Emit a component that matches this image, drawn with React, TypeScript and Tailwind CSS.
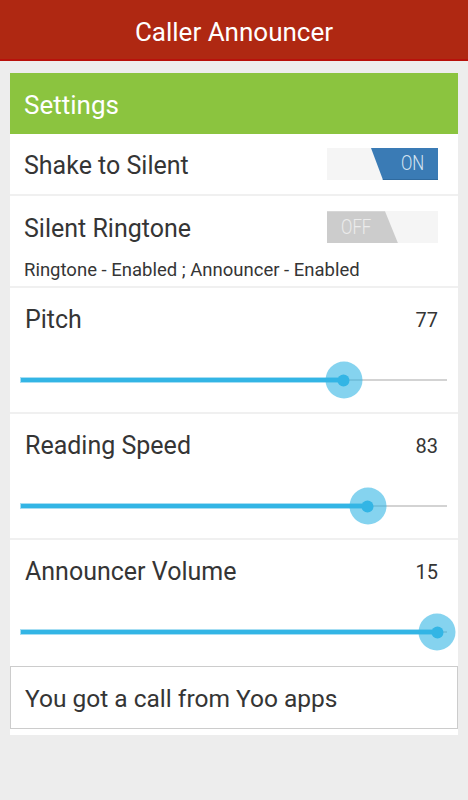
import React from "react";

const font = { fontFamily: "Roboto, 'Noto Sans', sans-serif" };

const Toggle = ({ on }: { on: boolean }) => {
	if (on) {
		return (
			<div className="relative w-[111px] h-[32px] bg-[#f5f5f5]">
				<div className="absolute right-0 top-0 h-full w-[67px] bg-[#3a7bb5] border-b border-[#2f6a9f] [clip-path:polygon(0_0,100%_0,100%_100%,12px_100%)] flex items-center justify-center pl-[16px]">
					<span className="text-[21px] leading-none text-[#d6e4f1] scale-x-[0.8] inline-block font-light">ON</span>
				</div>
			</div>
		);
	}
	return (
		<div className="relative w-[111px] h-[32px] bg-[#f5f5f5]">
			<div className="absolute left-0 top-0 h-full w-[71px] bg-[#cccccc] [clip-path:polygon(0_0,58px_0,100%_100%,0_100%)] flex items-center pl-[14px]">
				<span className="text-[21px] leading-none text-[#ececec] scale-x-[0.8] inline-block origin-left font-light">OFF</span>
			</div>
		</div>
	);
};

const Slider = ({ pos }: { pos: number }) => (
	<div className="relative mx-[11px] h-[40px] flex items-center">
		<div className="flex w-full items-center">
			<div className="h-[4px] bg-[#33b5e5] shadow-[0_0_0_1px_#a6def3]" style={{ width: `${pos}%` }} />
			<div className="flex-1 h-[2px] bg-[#d3d3d3]" />
		</div>
		<div
			className="absolute top-1/2 w-[37px] h-[37px] -translate-x-1/2 -translate-y-1/2 rounded-full bg-[#33b5e5]/60 grid place-items-center"
			style={{ left: `${pos}%` }}>
			<div className="w-[12px] h-[12px] rounded-full bg-[#33b5e5]" />
		</div>
	</div>
);

const SliderRow = ({ label, value, pos, last }: { label: string; value: number; pos: number; last?: boolean }) => (
	<div className={`h-[126px] ${last ? "" : "border-b-2 border-[#f0f0f0]"}`}>
		<div className="h-[64px] flex items-center justify-between pl-[15px] pr-[20px]">
			<span className="text-[25px] text-[#353535]">{label}</span>
			<span className="text-[20px] text-[#353535]">{value}</span>
		</div>
		<div className="h-[56px] flex items-center">
			<div className="w-full">
				<Slider pos={pos} />
			</div>
		</div>
	</div>
);

export default function App() {
	return (
		<div className="min-h-[800px] bg-[#ededed]" style={font}>
			<div className="h-[61px] bg-[#af2812] border-b-2 border-[#b8110b] flex items-center justify-center pt-[5px]">
				<span className="text-white text-[26px] leading-none">Caller Announcer</span>
			</div>
			<div className="mx-[10px] mt-[12px] bg-white pb-[6px]">
				<div className="h-[61px] bg-[#8bc43f] flex items-center pl-[14px] pt-[3px]">
					<span className="text-white text-[26px]">Settings</span>
				</div>
				<div className="h-[62px] border-b-2 border-[#f0f0f0] flex items-center justify-between pl-[14px] pr-[20px]">
					<span className="text-[25px] text-[#353535] pt-[4px]">Shake to Silent</span>
					<Toggle on />
				</div>
				<div className="h-[92px] border-b-2 border-[#f0f0f0] pl-[14px] pr-[20px] flex flex-col">
					<div className="flex items-center justify-between pt-[14px]">
						<span className="text-[25px] text-[#353535]">Silent Ringtone</span>
						<div className="-mt-[3px]">
							<Toggle on={false} />
						</div>
					</div>
					<span className="text-[18.5px] text-[#353535] mt-[13px] leading-none">Ringtone - Enabled ; Announcer - Enabled</span>
				</div>
				<SliderRow label="Pitch" value={77} pos={75.8} />
				<SliderRow label="Reading Speed" value={83} pos={81.4} />
				<SliderRow label="Announcer Volume" value={15} pos={97.7} last />
				<div className="h-[63px] border border-[#cccccc] flex items-center pl-[14px] pt-[3px]">
					<span className="text-[24.5px] text-[#353535]">You got a call from Yoo apps</span>
				</div>
			</div>
		</div>
	);
}
